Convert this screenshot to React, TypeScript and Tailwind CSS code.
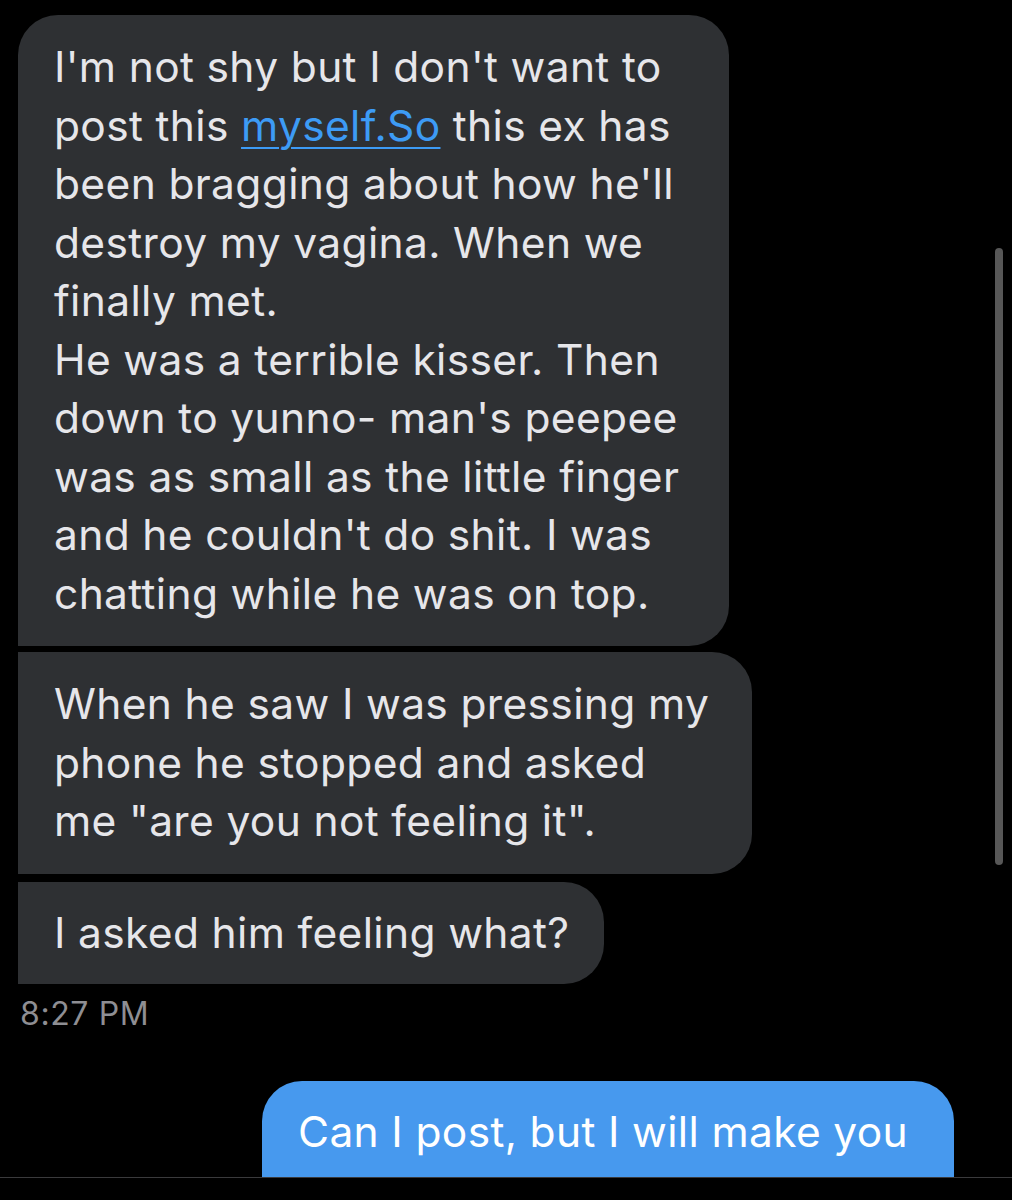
import React from "react";

const font = { fontFamily: "Inter, 'Noto Sans', sans-serif" };

export default function App() {
  return (
    <div className="relative w-[1012px] h-[1200px] bg-black overflow-hidden" style={font}>
      <div className="h-[1177px] overflow-hidden pt-[15px]">
        <div className="flex flex-col items-start gap-[6px] pl-[18px]">
          <div className="w-[711px] bg-[#2e3033] rounded-tl-[40px] rounded-tr-[40px] rounded-br-[40px] pl-[36px] py-[23px] text-[42.5px] leading-[58.5px] text-[#e6e6ea] whitespace-nowrap tracking-[0.35px]">
            <div>I'm not shy but I don't want to</div>
            <div>
              post this <span className="text-[#3d9bf5] underline decoration-[2px] underline-offset-[6px]">myself.So</span> this ex has
            </div>
            <div>been bragging about how he'll</div>
            <div>destroy my vagina. When we</div>
            <div>finally met.</div>
            <div>He was a terrible kisser. Then</div>
            <div>down to yunno- man's peepee</div>
            <div>was as small as the little finger</div>
            <div>and he couldn't do shit. I was</div>
            <div>chatting while he was on top.</div>
          </div>
          <div className="w-[734px] bg-[#2e3033] rounded-tr-[40px] rounded-br-[40px] pl-[36px] py-[23px] text-[42.5px] leading-[58.5px] text-[#e6e6ea] whitespace-nowrap tracking-[0.35px]">
            <div>When he saw I was pressing my</div>
            <div>phone he stopped and asked</div>
            <div>me "are you not feeling it".</div>
          </div>
          <div className="w-[586px] mt-[2px] bg-[#2e3033] rounded-tr-[40px] rounded-br-[40px] pl-[36px] py-[22px] text-[42.5px] leading-[58.5px] text-[#e6e6ea] whitespace-nowrap tracking-[0.35px]">
            <div>I asked him feeling what?</div>
          </div>
        </div>
        <div className="pl-[20px] mt-[11px] text-[32px] leading-[38px] text-[#8e8e93] tracking-[0.6px]">8:27 PM</div>
        <div className="flex justify-end pr-[58px] mt-[48px]">
          <div className="w-[692px] h-[160px] bg-[#4799ee] rounded-t-[40px] pl-[36px] pt-[22px] text-[42.5px] leading-[58.5px] text-white whitespace-nowrap tracking-[0.35px]">
            Can I post, but I will make you
          </div>
        </div>
      </div>
      <div className="h-[23px] border-t border-[#3a3a3c] bg-black" />
      <div className="absolute left-[995px] top-[248px] w-[8px] h-[617px] rounded-full bg-[#575757]" />
    </div>
  );
}
